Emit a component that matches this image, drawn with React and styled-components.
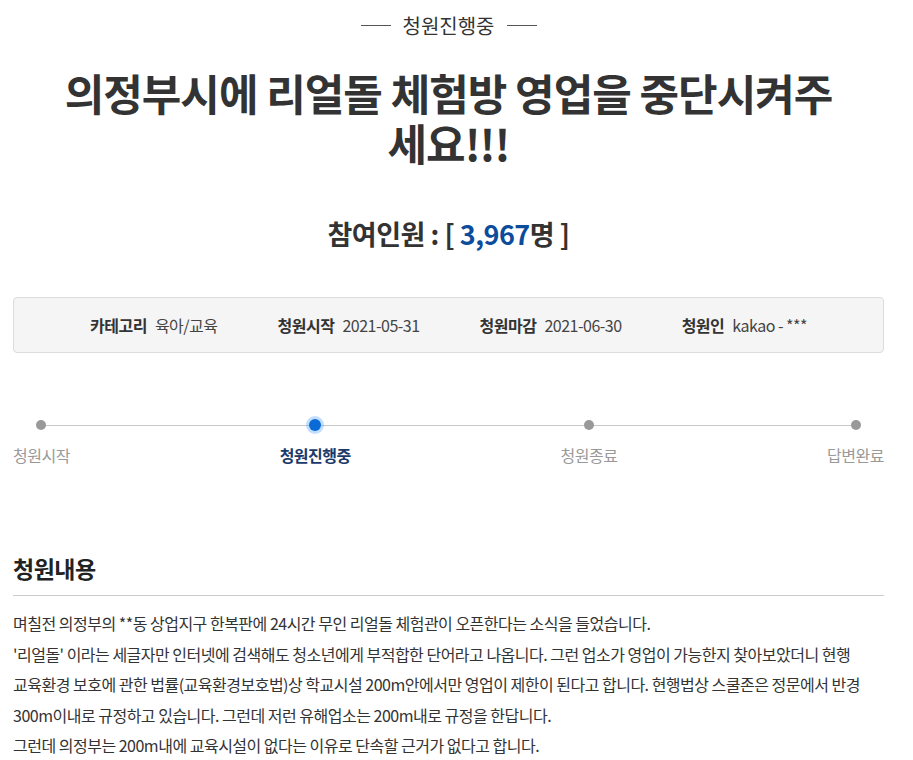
import styled, { createGlobalStyle } from "styled-components";

const GlobalStyle = createGlobalStyle`
  html, body {
    margin: 0;
    padding: 0;
    background: #fff;
  }
  body {
    font-family: "Noto Sans CJK KR", "Noto Sans", sans-serif;
    color: #333;
  }
`;

const steps = [
  { label: "청원시작" },
  { label: "청원진행중", active: true },
  { label: "청원종료" },
  { label: "답변완료" },
];

const info = [
  { label: "카테고리", value: "육아/교육" },
  { label: "청원시작", value: "2021-05-31" },
  { label: "청원마감", value: "2021-06-30" },
  { label: "청원인", value: "kakao - ***" },
];

function App() {
  return (
    <Page>
      <GlobalStyle />
      <Status>
        <Dash />
        <StatusText>청원진행중</StatusText>
        <Dash />
      </Status>
      <Title>의정부시에 리얼돌 체험방 영업을 중단시켜주세요!!!</Title>
      <Count>
        참여인원 : [ <Num>3,967</Num>명 ]
      </Count>
      <InfoBox>
        {info.map((it) => (
          <InfoItem key={it.label}>
            <InfoLabel>{it.label}</InfoLabel>
            <InfoValue>{it.value}</InfoValue>
          </InfoItem>
        ))}
      </InfoBox>
      <Steps>
        {steps.map((s) => (
          <Step key={s.label}>
            <Dot $active={s.active} />
            <StepLabel $active={s.active}>{s.label}</StepLabel>
          </Step>
        ))}
      </Steps>
      <SectionTitle>청원내용</SectionTitle>
      <Body>
        며칠전 의정부의 **동 상업지구 한복판에 24시간 무인 리얼돌 체험관이 오픈한다는 소식을 들었습니다.
        <br />
        '리얼돌' 이라는 세글자만 인터넷에 검색해도 청소년에게 부적합한 단어라고 나옵니다. 그런 업소가 영업이 가능한지 찾아보았더니 현행 교육환경 보호에 관한 법률(교육환경보호법)상 학교시설 200m안에서만 영업이 제한이 된다고 합니다. 현행법상 스쿨존은 정문에서 반경 300m이내로 규정하고 있습니다. 그런데 저런 유해업소는 200m내로 규정을 한답니다.
        <br />
        그런데 의정부는 200m내에 교육시설이 없다는 이유로 단속할 근거가 없다고 합니다.
      </Body>
    </Page>
  );
}

const Page = styled.div`
  width: 871px;
  margin-left: 13px;
  padding-top: 10px;
`;

const Status = styled.div`
  display: flex;
  align-items: center;
  justify-content: center;
  gap: 12px;
  height: 30px;
`;

const Dash = styled.span`
  width: 30px;
  height: 1px;
  background: #555;
`;

const StatusText = styled.span`
  font-size: 20px;
  color: #333;
`;

const Title = styled.h1`
  margin: 27px auto 0;
  width: 790px;
  text-align: center;
  font-size: 43px;
  line-height: 50px;
  font-weight: 700;
  letter-spacing: -1px;
  color: #333;
`;

const Count = styled.div`
  margin-top: 49px;
  text-align: center;
  font-size: 27px;
  line-height: 36px;
  font-weight: 700;
  color: #333;
  letter-spacing: -0.5px;
`;

const Num = styled.span`
  color: #0b4c9c;
`;

const InfoBox = styled.div`
  margin-top: 45px;
  height: 56px;
  box-sizing: border-box;
  background: #f5f5f5;
  border: 1px solid #dcdcdc;
  border-radius: 4px;
  display: flex;
  align-items: center;
  justify-content: center;
  gap: 60px;
`;

const InfoItem = styled.div`
  display: flex;
  align-items: center;
  gap: 8px;
  font-size: 16px;
  letter-spacing: -0.5px;
`;

const InfoLabel = styled.span`
  font-weight: 700;
  color: #333;
`;

const InfoValue = styled.span`
  color: #444;
`;

const Steps = styled.div`
  position: relative;
  margin-top: 66px;
  display: flex;
  justify-content: space-between;

  &::before {
    content: "";
    position: absolute;
    left: 28px;
    right: 28px;
    top: 6px;
    height: 1px;
    background: #c8c8c8;
  }
`;

const Step = styled.div`
  position: relative;
  display: flex;
  flex-direction: column;
  align-items: center;
  gap: 12px;
`;

const Dot = styled.span`
  width: ${(p) => (p.$active ? "12px" : "10px")};
  height: ${(p) => (p.$active ? "12px" : "10px")};
  margin-top: ${(p) => (p.$active ? "0" : "1px")};
  margin-bottom: ${(p) => (p.$active ? "0" : "1px")};
  border-radius: 50%;
  background: ${(p) => (p.$active ? "#0a6ad6" : "#999")};
  box-shadow: ${(p) => (p.$active ? "0 0 0 3px rgba(80, 160, 255, 0.35)" : "none")};
`;

const StepLabel = styled.span`
  font-size: 16px;
  letter-spacing: -0.5px;
  font-weight: ${(p) => (p.$active ? 700 : 400)};
  color: ${(p) => (p.$active ? "#1b3a6b" : "#999")};
`;

const SectionTitle = styled.h2`
  margin: 86px 0 0;
  padding-bottom: 12px;
  border-bottom: 1px solid #ccc;
  font-size: 23px;
  line-height: 30px;
  font-weight: 700;
  color: #222;
  letter-spacing: -0.5px;
`;

const Body = styled.p`
  margin: 12px 0 0;
  font-size: 16px;
  line-height: 30.5px;
  color: #333;
  letter-spacing: -0.5px;
  word-break: keep-all;
`;

export default App;
